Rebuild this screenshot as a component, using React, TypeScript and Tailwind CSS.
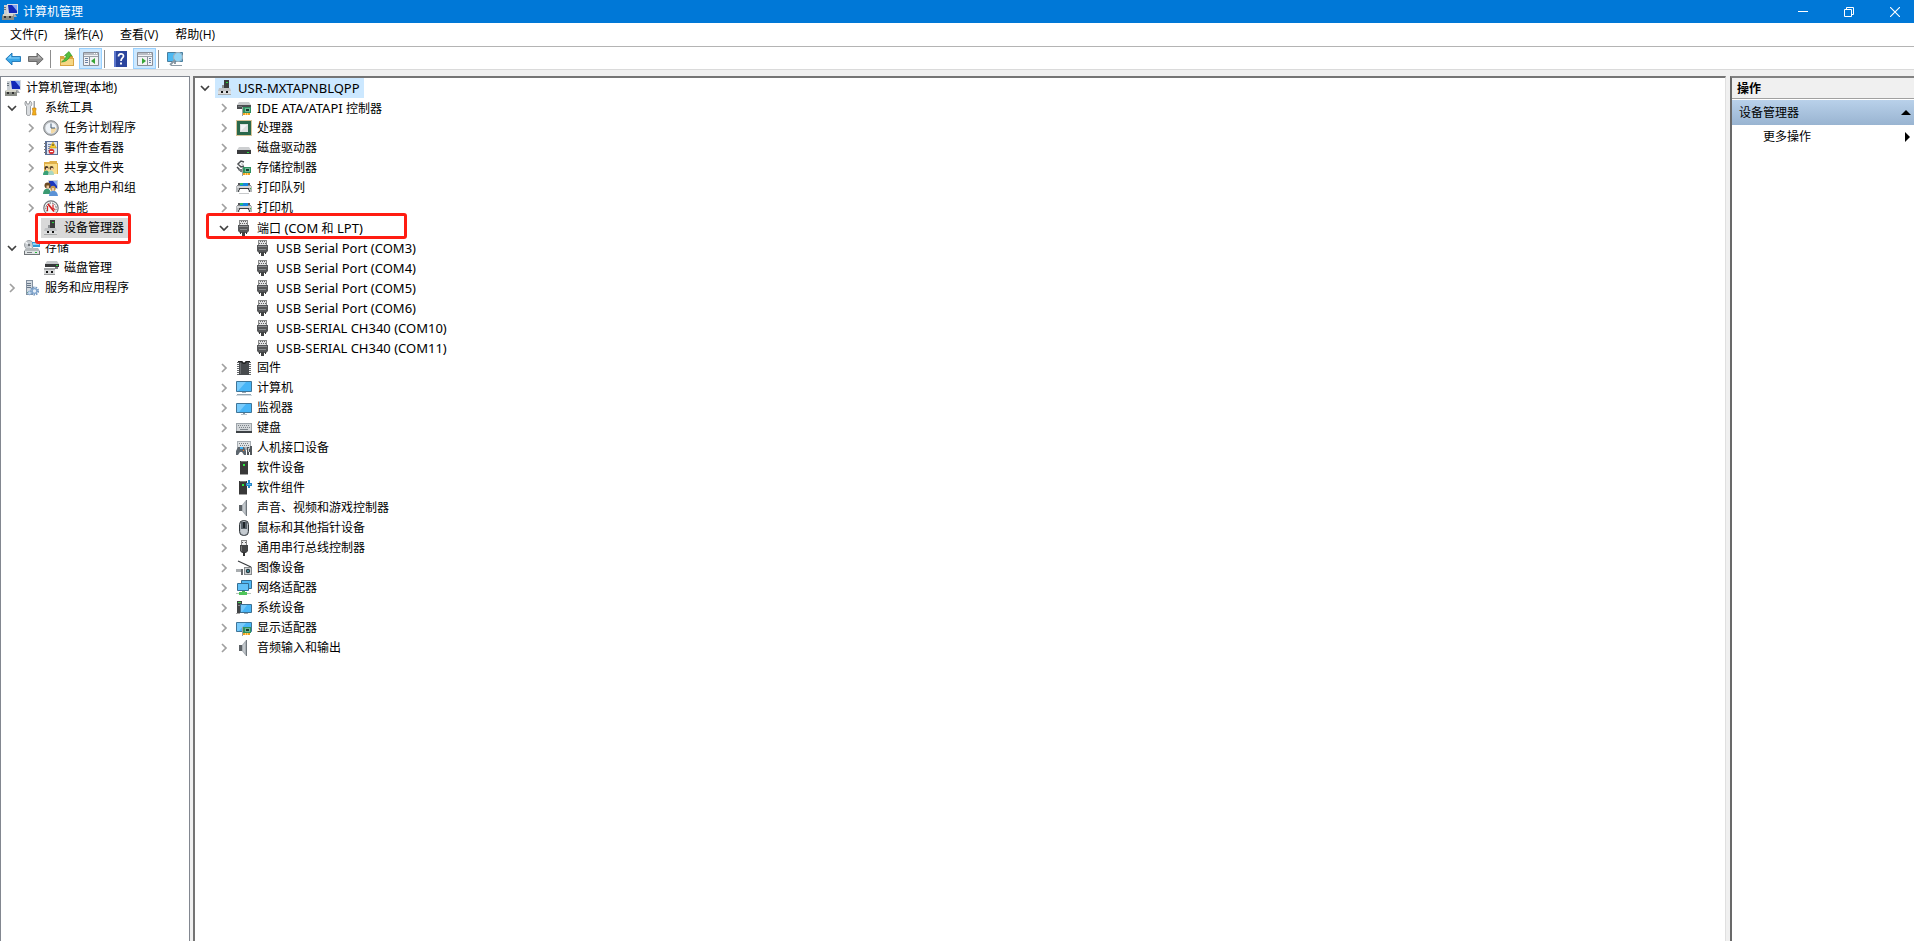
import React, { useState } from "react";
import clsx from "clsx";

type IconId =
  | "computer"
  | "tools"
  | "clock"
  | "events"
  | "shared"
  | "users"
  | "performance"
  | "host"
  | "storage"
  | "diskmgmt"
  | "services"
  | "ide"
  | "cpu"
  | "drive"
  | "storagectl"
  | "printer"
  | "port"
  | "firmware"
  | "pc"
  | "monitor"
  | "keyboard"
  | "hid"
  | "softdev"
  | "softcomp"
  | "speaker"
  | "mouse"
  | "usb"
  | "camera"
  | "network"
  | "system"
  | "display";

const pciCard = (
  <>
    <path d="M6 7h1v9H6z" fill="#9aa5a0" />
    <path d="M7 7h8v6H7z" fill="#2f9160" />
    <path d="M9 8h5v4H9z" fill="#6fb795" />
    <path d="M10 9h3v2h-3z" fill="#123f2c" />
    <path d="M7 13h7v2H7z" fill="#f0a020" />
    <path d="M9 13h1v2H9zM11 13h1v2h-1z" fill="#ffd772" />
  </>
);

const ICONS: Record<IconId, React.ReactNode> = {
  computer: (
    <>
      <path d="M5 0h11v10H5z" fill="#d6dbe0" />
      <path d="M6 1h9v8H7z" fill="#1028b8" />
      <path d="M10 1h5v6z" fill="#7fa4f4" />
      <path d="M8 10h5l2 3H8z" fill="#a9adb0" />
      <path d="M2 1h3v9H2z" fill="#c9cfd4" />
      <path d="M2 3h2v1H2zM2 5h2v1H2z" fill="#69737c" />
      <path d="M1 10h10l1 2v4H0v-4z" fill="#8a8d86" />
      <path d="M1 10h10v2H1z" fill="#d4d4c8" />
      <path d="M2 12h2v2H2zM7 12h2v2H7z" fill="#303030" />
    </>
  ),
  tools: (
    <>
      <path d="M2 1l1 3h2l1-3c2 1 2.500 4 .5 5.500V14c0 2-4 2-4 0V6.500C.5 5 .5 2 2 1z" fill="#dadde0" stroke="#85898d" strokeWidth=".8" />
      <path d="M9.500 1H11v7H9.500z" fill="#9ea2a6" />
      <path d="M8.500 8H12v2l-.5 1 .7 4H8.300l.7-4-.5-1z" fill="#f0ae1a" stroke="#c67c08" strokeWidth=".6" />
    </>
  ),
  clock: (
    <>
      <circle cx="8" cy="8" r="7.300" fill="#b9bdc0" stroke="#7f8387" strokeWidth="1" />
      <circle cx="8" cy="8" r="5.600" fill="#eef3f8" />
      <path d="M8 8h5.400A5.400 5.400 0 0 1 8 13.400z" fill="#f3d9a4" />
      <path d="M8 3.500V8h4" fill="none" stroke="#43586e" strokeWidth="1" />
    </>
  ),
  events: (
    <>
      <path d="M2 1h13v14H2z" fill="#5b6f96" />
      <path d="M4 2h10v12H4z" fill="#dde5f1" />
      <path d="M5 4.500h3M5 6.500h2M5 8.500h2M5 10.500h1" stroke="#7788b0" />
      <path d="M1 3h2v1H1zM1 6h2v1H1zM1 9h2v1H1zM1 12h2v1H1z" fill="#777" />
      <path d="M10 2l3.500 6h-7z" fill="#f8cf2b" stroke="#b78707" strokeWidth=".5" />
      <path d="M9.500 4h1v2h-1z" fill="#333" />
      <circle cx="8.500" cy="11.500" r="2.800" fill="#d8383a" />
      <path d="M7 11h3v1H7z" fill="#fff" />
    </>
  ),
  shared: (
    <>
      <path d="M1 2h5l1-1h7v2h1v11H1z" fill="#e0b04a" />
      <path d="M2 4h12v10H2z" fill="#f9dd8c" />
      <circle cx="3.500" cy="8" r="2" fill="#4e3b2a" />
      <circle cx="8.500" cy="8" r="2" fill="#5d4630" />
      <path d="M3 8h2v2H3zM8 8h2v2H8z" fill="#f2c8a0" />
      <path d="M0 15c0-6 6.500-6 6.500 0z" fill="#38a077" />
      <path d="M5 15c0-6 6-6 6 0z" fill="#a9d6c2" />
    </>
  ),
  users: (
    <>
      <path d="M5 0h10v9H5z" fill="#ccd3da" />
      <path d="M6 1h8v7H6z" fill="#1c37bd" />
      <path d="M10 1h4v5z" fill="#8eb0f2" />
      <circle cx="4.500" cy="5.500" r="3" fill="#6c4a24" />
      <path d="M3.500 5.500H6v3H3.500z" fill="#efc59a" />
      <path d="M0 14c0-7 8-7 8 0z" fill="#3a9a72" />
      <circle cx="10" cy="8.500" r="2.700" fill="#c79b4a" />
      <path d="M9 8h2v3H9z" fill="#f2d0ac" />
      <path d="M6 16c0-7 8.500-7 9 0z" fill="#5b92d6" />
    </>
  ),
  performance: (
    <>
      <circle cx="8" cy="8" r="7.200" fill="#f7f7f7" stroke="#74787c" strokeWidth="1.200" />
      <path d="M4 11.500A5.200 5.200 0 1 1 12 11.500" fill="none" stroke="#555" strokeWidth="1" strokeDasharray="1.500 1" />
      <path d="M5 4l6 7.500" stroke="#d42020" strokeWidth="1.800" />
      <path d="M4.500 6v5M10 4.500v4l2 1" stroke="#d42020" strokeWidth="1.200" fill="none" />
    </>
  ),
  host: (
    <>
      <path d="M7 0h5v9H7z" fill="#3c3c3c" />
      <path d="M5 5h2v3H5z" fill="#8e9194" />
      <path d="M9 2h2v1H9z" fill="#27d53c" />
      <path d="M2 8h11l1 3v4H1v-4z" fill="#c1c3c5" />
      <path d="M1 11h13v4H1z" fill="#dcddde" />
      <path d="M4 11h2v2H4zM9 11h2v2H9z" fill="#151515" />
      <path d="M1 14h13v1H1z" fill="#a7a9aa" />
    </>
  ),
  storage: (
    <>
      <circle cx="5" cy="5" r="4.500" fill="#c9cdd1" stroke="#8a8f94" strokeWidth=".8" />
      <path d="M5 5L1 3l1-2zM5 5l3 3-1 1z" fill="#f4f6f8" />
      <circle cx="5" cy="5" r="1.200" fill="#6e7378" />
      <path d="M8 2h8v5H9z" fill="#2c9bd8" />
      <path d="M9 3h6v2H9z" fill="#8fd3f5" />
      <path d="M2 8h12l2 3H0z" fill="#b4b9bc" />
      <path d="M0 11h16v4H0z" fill="#6f7478" />
      <path d="M1 11h14v3H1z" fill="#dfe3e4" />
      <path d="M3 12h5v1H3z" fill="#7a7f83" />
      <path d="M11 12h2v1h-2z" fill="#25b83a" />
    </>
  ),
  diskmgmt: (
    <>
      <path d="M4 1h10l2 3H2z" fill="#c4c7c9" />
      <path d="M2 4h14v3H2z" fill="#38393b" />
      <path d="M13 5h2v1h-2z" fill="#29d43d" />
      <path d="M12 7h3v2h-3z" fill="#7b7d80" />
      <path d="M1 8h11v7H1z" fill="#d9dadb" />
      <path d="M1 8h11v2H1z" fill="#a5a7a9" />
      <path d="M3 11h2v2H3zM8 11h2v2H8z" fill="#161616" />
      <path d="M1 14h11v1H1z" fill="#97999a" />
    </>
  ),
  services: (
    <>
      <path d="M2 0h7v15H2z" fill="#8390a0" />
      <path d="M3 1h5v13H3z" fill="#d3dae1" />
      <path d="M3 3h4v1H3zM3 5h4v1H3zM3 7h4v1H3z" fill="#697889" />
      <path d="M3 12h2v1H3z" fill="#34a54a" />
      <circle cx="10.500" cy="11" r="3.600" fill="none" stroke="#759ac3" strokeWidth="2" strokeDasharray="1.600 .9" />
      <circle cx="10.500" cy="11" r="2.300" fill="#e6eff8" stroke="#7fa4cd" strokeWidth="1.200" />
      <circle cx="5.500" cy="13" r="1.800" fill="#c9dcf0" stroke="#7fa4cd" strokeWidth=".8" />
    </>
  ),
  ide: (
    <>
      <path d="M3 2h10l2 3H1z" fill="#c6c8ca" />
      <path d="M1 5h14v4H1z" fill="#4b4d50" />
      <path d="M2 6h4v1H2z" fill="#77797c" />
      {pciCard}
    </>
  ),
  cpu: (
    <>
      <path d="M.5.5h15v15H.5z" fill="none" stroke="#b18a35" strokeDasharray="1 1" />
      <path d="M1 1h14v14H1z" fill="#2a684b" />
      <path d="M4 4h8v8H4z" fill="#dfe2e3" />
      <path d="M5 5h6l-6 6z" fill="#f6f7f7" />
    </>
  ),
  drive: (
    <>
      <path d="M3 7h10l2 3H1z" fill="#cdcfd1" />
      <path d="M1 10h14v4H1z" fill="#393b3d" />
      <path d="M11 12h2v1h-2z" fill="#2cdf43" />
    </>
  ),
  storagectl: (
    <>
      <path d="M8 2L5 1 2 4l3 3 3-1M1 7l4 4 2-1" fill="none" stroke="#4b4e51" strokeWidth="1.500" />
      <path d="M5 3l3 1-2 2z" fill="#bfc2c4" />
      <path d="M2 9h5v4L2 10z" fill="#75797c" />
      {pciCard}
    </>
  ),
  printer: (
    <>
      <path d="M2 3h12v3H2z" fill="#55585b" />
      <path d="M4 3h8v3H4z" fill="#1688df" />
      <path d="M4 3h3v2H4z" fill="#29bd74" />
      <path d="M1 5h3v1H1zM12 5h3v1h-3z" fill="#888b8e" />
      <path d="M0 6h16v6H0z" fill="#b4b7b9" />
      <path d="M1 6h14v2H1z" fill="#d3d5d7" />
      <path d="M3 8h10v2H3z" fill="#3b3e41" />
      <path d="M2 10h1v2H2zM13 10h1v2h-1z" fill="#55585b" />
      <path d="M4 9h8l1 5H3z" fill="#fff" />
      <path d="M3 13h10v1H3z" fill="#c7c9cb" />
      <path d="M14 8h1v1h-1z" fill="#2bc340" />
    </>
  ),
  port: (
    <>
      <path d="M3 0h9v5H3z" fill="#8a8b8c" />
      <path d="M4 1h7v4H4z" fill="#e2e3e4" />
      <path d="M5 1h1v1H5zM7 1h1v1H7zM9 1h1v1H9zM4 3h1v1H4zM6 3h1v1H6zM8 3h1v1H8zM10 3h1v1h-1z" fill="#666" />
      <path d="M2 5h11v6l-2 2H4l-2-2z" fill="#555759" />
      <path d="M3 6h9v1H3zM4 9h7v1H4z" fill="#898b8d" />
      <path d="M4 12h1v2H4zM10 12h1v2h-1z" fill="#353637" />
      <path d="M6 12h3v4H6z" fill="#404142" />
    </>
  ),
  firmware: (
    <>
      <path d="M2 2v13M14 2v13" stroke="#65686b" strokeWidth="2" strokeDasharray="1 1" />
      <path d="M3 1h3l2 2 2-2h3v14H3z" fill="#484b4e" />
      <path d="M4 3h1v11H4z" fill="#6a6d70" />
      <path d="M2 1h4l2 2 2-2h4v1h-3L9 4H7L5 2H2z" fill="#222" />
    </>
  ),
  pc: (
    <>
      <path d="M.5 1.500h15v10H.5z" fill="#47b5f7" stroke="#3f7598" />
      <path d="M1 2h9l-8 9H1z" fill="#79cbfb" />
      <path d="M6 12h4v1H6z" fill="#9aa9b3" />
      <path d="M1 14h14v1H1z" fill="#92a3b0" />
      <path d="M0 15h16v1H0z" fill="#d2dbe1" />
    </>
  ),
  monitor: (
    <>
      <path d="M.5 3.500h15v9H.5z" fill="#47b5f7" stroke="#3f7598" />
      <path d="M1 4h9l-7 8H1z" fill="#79cbfb" />
      <path d="M7 13h2v1H7z" fill="#8293a0" />
      <path d="M5 14h6v1H5z" fill="#b6c0c7" />
    </>
  ),
  keyboard: (
    <>
      <path d="M0 3h16v9H0z" fill="#9da4aa" />
      <path d="M1 4h14v7H1z" fill="#d2d6d9" />
      <path d="M2 5.500h12M3 7.500h11" stroke="#7e858b" strokeWidth="1" strokeDasharray="1 1" />
      <path d="M4 9.500h8" stroke="#7e858b" strokeWidth="1" />
      <path d="M0 11h16v2H0z" fill="#3d4145" />
    </>
  ),
  hid: (
    <>
      <path d="M1 1h14v9H1z" fill="#aab0b5" />
      <path d="M2 2h12v5H2z" fill="#dfe2e4" />
      <path d="M3 3.500h10M4 5.500h9" stroke="#777e84" strokeDasharray="1 1" />
      <path d="M2 7h6l2 4v4H8l-2-3H4l-2 3H0v-4z" fill="#5d666e" />
      <path d="M4 7h3v2H4z" fill="#43b2f4" />
      <path d="M7 10h1v1H7z" fill="#f08030" />
      <path d="M11 7h2v2h1V6h2v9h-2v-3h-1v3h-2z" fill="#50565b" />
      <path d="M12 8h1v4h-1z" fill="#c3c8cc" />
    </>
  ),
  softdev: (
    <>
      <path d="M4 1h8v14H4z" fill="#383838" />
      <path d="M5 1h6v1H5z" fill="#777" />
      <path d="M7 4h2v2H7z" fill="#2bea3e" />
      <path d="M4 14h8v1H4z" fill="#a0a0a0" />
    </>
  ),
  softcomp: (
    <>
      <path d="M3 1h8v14H3z" fill="#383838" />
      <path d="M4 1h6v1H4z" fill="#777" />
      <path d="M6 4h2v2H6z" fill="#2bea3e" />
      <path d="M3 14h8v1H3z" fill="#a0a0a0" />
      <path d="M10 3h2V0h2v3h2v3h-2v2h-2V6h-2z" fill="#2587c8" />
      <path d="M11 4h4v1h-4z" fill="#62b5e5" />
    </>
  ),
  speaker: (
    <>
      <path d="M3 5h3v6H3z" fill="#5d6266" />
      <path d="M6 5l4-5v16l-4-5z" fill="#a9afb4" />
      <path d="M10 0h1v16h-1z" fill="#6f767c" />
      <path d="M7 5l2-2v10l-2-2z" fill="#c3c8cc" />
    </>
  ),
  mouse: (
    <>
      <rect x="3.500" y=".5" width="9" height="15" rx="4" fill="#aeb5bb" stroke="#33383c" />
      <path d="M5 2h6v7H5z" fill="#59626a" />
      <path d="M7 2h2v6H7z" fill="#1f252a" />
      <path d="M5 9h6v3c0 3-6 3-6 0z" fill="#c5cbd0" />
    </>
  ),
  usb: (
    <>
      <path d="M5 0h6v5H5z" fill="#888" />
      <path d="M6 1h4v4H6z" fill="#ebebeb" />
      <path d="M6 2h1v1H6zM9 2h1v1H9z" fill="#555" />
      <path d="M4 5h8v6l-2 2H6l-2-2z" fill="#454647" />
      <path d="M5 6h1v5H5z" fill="#777" />
      <path d="M7 12h2v4H7z" fill="#333" />
    </>
  ),
  camera: (
    <>
      <path d="M2 1l13 6" stroke="#3b3e41" strokeWidth="1.300" />
      <path d="M0 9h7v3H0z" fill="#a9adb0" />
      <path d="M5 9h2v6H5z" fill="#64686b" />
      <path d="M8 7h8v8H8z" fill="#85898c" />
      <path d="M9 8h6v6H9z" fill="#d0d3d5" />
      <circle cx="12" cy="11" r="2.200" fill="#263940" />
      <circle cx="12" cy="11" r="1" fill="#4a9dab" />
    </>
  ),
  network: (
    <>
      <path d="M5.500.5h10v8h-10z" fill="#50b8f4" stroke="#356f94" />
      <path d="M1.500 3.500h11v7h-11z" fill="#63c2f8" stroke="#356f94" />
      <path d="M6 11h3v2H6z" fill="#48b54c" />
      <path d="M0 13h15v1H0z" fill="#b8c4bc" />
      <path d="M3 12h8v3H3z" fill="#4fc45a" />
    </>
  ),
  system: (
    <>
      <path d="M1 1h5v12H1z" fill="#434547" />
      <path d="M2 2h3v1H2z" fill="#45d052" />
      <path d="M2 5h3v1H2z" fill="#888" />
      <path d="M4.500 4.500h11v8h-11z" fill="#48b5f6" stroke="#3c7092" />
      <path d="M5 5h6l-5 7H5z" fill="#75c8fa" />
      <path d="M8 13h4v1H8z" fill="#9ba8b1" />
      <path d="M0 13h4v1H0z" fill="#aaa" />
    </>
  ),
  display: (
    <>
      <path d="M.5 2.500h15v9H.5z" fill="#47b5f7" stroke="#3f7598" />
      <path d="M1 3h9l-7 8H1z" fill="#79cbfb" />
      {pciCard}
    </>
  ),
};

function Icon({ id }: { id: IconId }) {
  return (
    <svg viewBox="0 0 16 16" className="h-4 w-4 shrink-0" aria-hidden="true">
      {ICONS[id]}
    </svg>
  );
}

type TreeNode = {
  label: string;
  icon: IconId;
  children?: TreeNode[];
  // has children that are not loaded yet
  lazy?: boolean;
  highlight?: "selected" | "inactive";
  mark?: string;
};

const CONSOLE_TREE: TreeNode[] = [
  {
    label: "系统工具",
    icon: "tools",
    children: [
      { label: "任务计划程序", icon: "clock", lazy: true },
      { label: "事件查看器", icon: "events", lazy: true },
      { label: "共享文件夹", icon: "shared", lazy: true },
      { label: "本地用户和组", icon: "users", lazy: true },
      { label: "性能", icon: "performance", lazy: true },
      {
        label: "设备管理器",
        icon: "host",
        highlight: "inactive",
        mark: "left-[33px] -top-[5px] h-[31px] w-[96px]",
      },
    ],
  },
  {
    label: "存储",
    icon: "storage",
    children: [{ label: "磁盘管理", icon: "diskmgmt" }],
  },
  { label: "服务和应用程序", icon: "services", lazy: true },
];

const DEVICE_TREE: TreeNode[] = [
  {
    label: "USR-MXTAPNBLQPP",
    icon: "host",
    highlight: "selected",
    children: [
      { label: "IDE ATA/ATAPI 控制器", icon: "ide", lazy: true },
      { label: "处理器", icon: "cpu", lazy: true },
      { label: "磁盘驱动器", icon: "drive", lazy: true },
      { label: "存储控制器", icon: "storagectl", lazy: true },
      { label: "打印队列", icon: "printer", lazy: true },
      { label: "打印机", icon: "printer", lazy: true },
      {
        label: "端口 (COM 和 LPT)",
        icon: "port",
        mark: "left-[11px] -top-[5px] h-[26px] w-[201px]",
        children: [
          { label: "USB Serial Port (COM3)", icon: "port" },
          { label: "USB Serial Port (COM4)", icon: "port" },
          { label: "USB Serial Port (COM5)", icon: "port" },
          { label: "USB Serial Port (COM6)", icon: "port" },
          { label: "USB-SERIAL CH340 (COM10)", icon: "port" },
          { label: "USB-SERIAL CH340 (COM11)", icon: "port" },
        ],
      },
      { label: "固件", icon: "firmware", lazy: true },
      { label: "计算机", icon: "pc", lazy: true },
      { label: "监视器", icon: "monitor", lazy: true },
      { label: "键盘", icon: "keyboard", lazy: true },
      { label: "人机接口设备", icon: "hid", lazy: true },
      { label: "软件设备", icon: "softdev", lazy: true },
      { label: "软件组件", icon: "softcomp", lazy: true },
      { label: "声音、视频和游戏控制器", icon: "speaker", lazy: true },
      { label: "鼠标和其他指针设备", icon: "mouse", lazy: true },
      { label: "通用串行总线控制器", icon: "usb", lazy: true },
      { label: "图像设备", icon: "camera", lazy: true },
      { label: "网络适配器", icon: "network", lazy: true },
      { label: "系统设备", icon: "system", lazy: true },
      { label: "显示适配器", icon: "display", lazy: true },
      { label: "音频输入和输出", icon: "speaker", lazy: true },
    ],
  },
];

const INDENT = ["pl-[2px]", "pl-[21px]", "pl-[40px]"];

// Latin runs are set one size up so they sit evenly next to the Chinese text
function Label({ text }: { text: string }) {
  const runs = text.split(/([\x20-\x7e]+)/).filter(Boolean);
  return (
    <span className="whitespace-pre">
      {runs.map((run, i) =>
        /^[\x20-\x7e]/.test(run) ? (
          <span key={i} className="text-[13px]">
            {run}
          </span>
        ) : (
          run
        ),
      )}
    </span>
  );
}

function TreeItem({ node, level }: { node: TreeNode; level: number }) {
  const [open, setOpen] = useState(!!node.children);
  const expandable = !!node.children || node.lazy;

  return (
    <li role="treeitem" aria-expanded={expandable ? open : undefined}>
      <div className={clsx("relative flex h-5 items-center", INDENT[level])}>
        {expandable ? (
          <button
            className="flex h-4 w-4 shrink-0 items-center justify-center"
            aria-label={`${open ? "折叠" : "展开"} ${node.label}`}
            onClick={() => setOpen(!open)}
          >
            <svg viewBox="0 0 10 10" className="h-[10px] w-[10px]" fill="none" strokeWidth="1.700">
              {open ? (
                <path d="M1 3l4 4 4-4" stroke="#404040" />
              ) : (
                <path d="M3 1l4 4-4 4" stroke="#a0a0a0" />
              )}
            </svg>
          </button>
        ) : (
          <span className="w-4 shrink-0" />
        )}
        <span
          className={clsx(
            "ml-[2px] flex h-5 items-center gap-[5px] pl-[2px] pr-1",
            node.highlight === "selected" && "bg-[#cce8ff]",
            node.highlight === "inactive" && "bg-[#d9d9d9]",
          )}
        >
          <Icon id={node.icon} />
          <Label text={node.label} />
        </span>
        {node.mark && (
          <span
            className={clsx(
              "pointer-events-none absolute z-10 rounded-[3px] border-[3px] border-[#ff1c12]",
              node.mark,
            )}
          />
        )}
      </div>
      {open && node.children && (
        <ul role="group">
          {node.children.map((child) => (
            <TreeItem key={child.label} node={child} level={level + 1} />
          ))}
        </ul>
      )}
    </li>
  );
}

const MENUS = ["文件(F)", "操作(A)", "查看(V)", "帮助(H)"];

function TitleBar() {
  return (
    <header className="flex h-[23px] items-center bg-[#0078d7] pl-[2px] text-white">
      <Icon id="computer" />
      <h1 className="ml-[5px] flex-1">计算机管理</h1>
      <button className="flex h-full w-[46px] items-center justify-center" aria-label="最小化">
        <svg viewBox="0 0 10 10" className="h-[10px] w-[10px]">
          <path d="M0 4h10v1H0z" fill="#fff" />
        </svg>
      </button>
      <button className="flex h-full w-[46px] items-center justify-center" aria-label="还原">
        <svg viewBox="0 0 10 10" className="h-[10px] w-[10px]" fill="none" stroke="#fff">
          <path d="M.5 2.500h7v7h-7zM2.500 2.500v-2h7v7h-2" />
        </svg>
      </button>
      <button className="flex h-full w-[42px] items-center justify-center pl-1" aria-label="关闭">
        <svg viewBox="0 0 10 10" className="h-[10px] w-[10px]" stroke="#fff" strokeWidth="1.100">
          <path d="M0 0l10 10M10 0L0 10" />
        </svg>
      </button>
    </header>
  );
}

function PaneIcon({ right }: { right?: boolean }) {
  return (
    <svg viewBox="0 0 16 14" className="h-[14px] w-4">
      <path d="M.5.5h15v13H.5z" fill="#f2f3f5" stroke="#8a8f98" />
      <path d="M1 1h14v2H1z" fill="#b9bdc4" />
      <path d="M11 1h1v1h-1zM13 1h1v1h-1z" fill="#fff" />
      <path d="M1 4h14v1H1z" fill="#9ba1aa" />
      {right ? (
        <>
          <path d="M10 5h1v8h-1z" fill="#8a8f98" />
          <path d="M12 6h2v1h-2zM12 8h2v1h-2zM12 10h2v1h-2z" fill="#6d83a5" />
          <path d="M5 6l4 3-4 3z" fill="#35a535" />
        </>
      ) : (
        <>
          <path d="M6 5h1v8H6z" fill="#8a8f98" />
          <path d="M2 6h3v1H2zM2 8h3v1H2zM2 10h3v1H2z" fill="#6d83a5" />
          <path d="M12 6L8 9l4 3z" fill="#35a535" />
        </>
      )}
    </svg>
  );
}

function Separator() {
  return <span className="h-[18px] w-px bg-[#8d8d8d]" />;
}

function Toolbar() {
  return (
    <div className="flex h-[22px] items-center border-t border-white pl-[5px]">
      <button aria-label="后退">
        <svg viewBox="0 0 16 14" className="h-[14px] w-4">
          <path d="M.8 7L7 1v3.500h8.500v5H7V13z" fill="#3aa7e8" stroke="#1d74b4" strokeWidth=".9" />
          <path d="M2.500 6.500L6 3v2.500h8.500v1z" fill="#85d0fa" />
        </svg>
      </button>
      <button className="ml-[7px]" aria-label="前进">
        <svg viewBox="0 0 16 14" className="h-[14px] w-4">
          <path d="M15.200 7L9 1v3.500H.5v5H9V13z" fill="#8d8d8d" stroke="#626262" strokeWidth=".9" />
          <path d="M13.500 6.500L10 3v2.500H1.500v1z" fill="#b9b9b9" />
        </svg>
      </button>
      <span className="w-[6px]" />
      <Separator />
      <button className="ml-2" aria-label="向上一级">
        <svg viewBox="0 0 16 16" className="h-4 w-4">
          <path d="M10 5h4v3h-4z" fill="#dca53c" />
          <path d="M1 5h4l1 2h9v8H1z" fill="#d9a441" />
          <path d="M2 8h12v6H2z" fill="#f6d684" />
          <path d="M2.500 11c2-1.500 4-3.500 5-6.500H5.500L10 .5 13 5h-2c-1 3-4 6-8.500 6z" fill="#55bf3d" stroke="#2b8f20" strokeWidth=".6" />
        </svg>
      </button>
      <button
        className="ml-[4px] flex h-[21px] w-[23px] items-center justify-center border border-[#99d1ff] bg-[#cce8ff]"
        aria-label="显示/隐藏控制台树"
      >
        <PaneIcon />
      </button>
      <span className="w-[2px]" />
      <Separator />
      <button className="ml-2" aria-label="帮助">
        <svg viewBox="0 0 16 16" className="h-4 w-4">
          <path d="M1 0h13v16H1z" fill="#2b459e" />
          <path d="M1 0h2v16H1z" fill="#5d77cc" />
          <path d="M5.500 5.500c0-3.500 5-3.500 5-.5 0 2-2.500 2-2.500 5" fill="none" stroke="#fff" strokeWidth="1.700" />
          <path d="M7 11.500h2v2H7z" fill="#fff" />
        </svg>
      </button>
      <button
        className="ml-[4px] flex h-[21px] w-[23px] items-center justify-center border border-[#99d1ff] bg-[#cce8ff]"
        aria-label="显示/隐藏操作窗格"
      >
        <PaneIcon right />
      </button>
      <span className="w-[2px]" />
      <Separator />
      <button className="ml-2" aria-label="扫描检测硬件改动">
        <svg viewBox="0 0 17 16" className="h-4 w-[17px]">
          <path d="M.5 1.500h15v9H.5z" fill="#4db9f2" stroke="#4a7f9e" />
          <path d="M4 14h11v1H4zM7 11h2v2H7z" fill="#8d9ba5" />
          <circle cx="11" cy="6" r="4.500" fill="#8fd3f5" stroke="#9fb0bc" strokeWidth="1.200" />
          <path d="M8 9l-5 5" stroke="#8a98a3" strokeWidth="1.800" />
        </svg>
      </button>
    </div>
  );
}

function ActionsPane() {
  return (
    <aside className="w-[184px] shrink-0 border-l-2 border-t-2 border-l-[#696969] border-t-[#828282] bg-white">
      <h2 className="flex h-[21px] items-center border-b border-[#a0a0a0] bg-[#f0f0f0] pl-[5px] pt-[2px] font-bold">
        操作
      </h2>
      <button className="mt-px flex h-[25px] w-full items-center justify-between bg-linear-to-b from-[#b9d1ea] to-[#99b4d1] pl-[7px] pr-[3px]">
        设备管理器
        <svg viewBox="0 0 10 5" className="h-[5px] w-[10px]">
          <path d="M5 0l5 5H0z" />
        </svg>
      </button>
      <button className="flex h-6 w-full items-center justify-between pl-[31px] pr-1">
        更多操作
        <svg viewBox="0 0 5 10" className="h-[10px] w-[5px]">
          <path d="M0 0l5 5-5 5z" />
        </svg>
      </button>
    </aside>
  );
}

export default function App() {
  return (
    <div className="flex min-h-screen flex-col bg-[#f0f0f0] font-['Noto_Sans','Noto_Sans_CJK_SC',sans-serif] text-[12px] leading-4 text-black">
      <TitleBar />
      <nav className="flex h-[24px] items-center gap-[17px] border-b border-[#b4b4b4] bg-white pl-[10px] font-['Open_Sans','Noto_Sans_CJK_SC',sans-serif]">
        {MENUS.map((menu) => (
          <button key={menu}>{menu}</button>
        ))}
      </nav>
      <div className="border-b border-[#dadada] bg-white">
        <Toolbar />
      </div>

      <main className="mt-[6px] flex flex-1">
        {/* Console tree */}
        <section className="w-[190px] shrink-0 border-x border-t border-[#828790] bg-white pt-px">
          <ul role="tree">
            <li role="treeitem" aria-expanded="true">
              <div className="flex h-5 items-center gap-[5px] pl-1">
                <Icon id="computer" />
                计算机管理(本地)
              </div>
              <ul role="group" className="pl-px">
                {CONSOLE_TREE.map((node) => (
                  <TreeItem key={node.label} node={node} level={0} />
                ))}
              </ul>
            </li>
          </ul>
        </section>

        {/* Device tree */}
        <section className="ml-[3px] min-w-0 flex-1 border-l-2 border-r border-t-2 border-l-[#747474] border-r-[#e0e0e0] border-t-[#747474] bg-white">
          <ul role="tree">
            {DEVICE_TREE.map((node) => (
              <TreeItem key={node.label} node={node} level={0} />
            ))}
          </ul>
        </section>

        <span className="w-1 shrink-0" />
        <ActionsPane />
      </main>
    </div>
  );
}
